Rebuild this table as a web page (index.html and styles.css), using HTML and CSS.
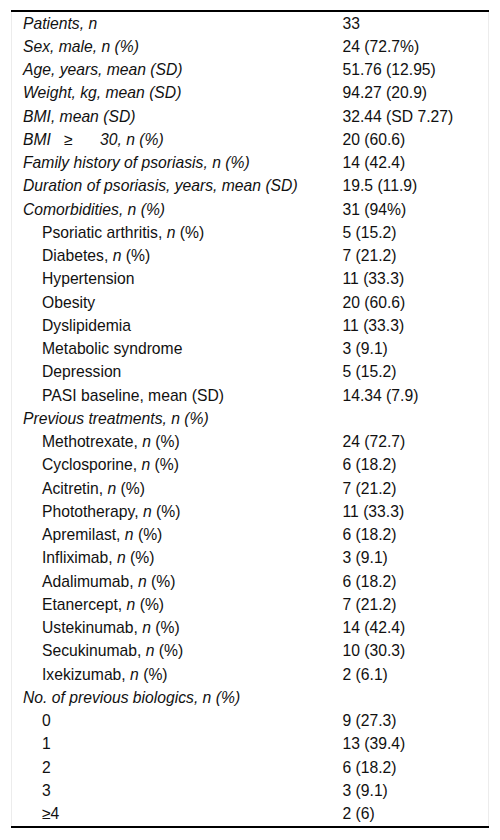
FILE: index.html
```html
<!DOCTYPE html>
<html lang="en">
<head>
    <meta charset="UTF-8">
    <meta name="viewport" content="width=device-width, initial-scale=1.0">
    <title>Baseline characteristics</title>
    <link rel="stylesheet" href="styles.css">
</head>
<body>
    <div class="wrap">
        <table class="data-table">
            <colgroup>
                <col class="col-label">
                <col class="col-value">
            </colgroup>
            <tbody>
                <tr><td class="head">Patients, n</td><td>33</td></tr>
                <tr><td class="head">Sex, male, n (%)</td><td>24 (72.7%)</td></tr>
                <tr><td class="head">Age, years, mean (SD)</td><td>51.76 (12.95)</td></tr>
                <tr><td class="head">Weight, kg, mean (SD)</td><td>94.27 (20.9)</td></tr>
                <tr><td class="head">BMI, mean (SD)</td><td>32.44 (SD 7.27)</td></tr>
                <tr><td class="head"><span class="bmi-word">BMI</span><span class="bmi-sign">≥</span>30, n (%)</td><td>20 (60.6)</td></tr>
                <tr><td class="head">Family history of psoriasis, n (%)</td><td>14 (42.4)</td></tr>
                <tr><td class="head">Duration of psoriasis, years, mean (SD)</td><td>19.5 (11.9)</td></tr>
                <tr><td class="head">Comorbidities, n (%)</td><td>31 (94%)</td></tr>
                <tr><td class="sub">Psoriatic arthritis, <i>n</i> (%)</td><td>5 (15.2)</td></tr>
                <tr><td class="sub">Diabetes, <i>n</i> (%)</td><td>7 (21.2)</td></tr>
                <tr><td class="sub">Hypertension</td><td>11 (33.3)</td></tr>
                <tr><td class="sub">Obesity</td><td>20 (60.6)</td></tr>
                <tr><td class="sub">Dyslipidemia</td><td>11 (33.3)</td></tr>
                <tr><td class="sub">Metabolic syndrome</td><td>3 (9.1)</td></tr>
                <tr><td class="sub">Depression</td><td>5 (15.2)</td></tr>
                <tr><td class="sub">PASI baseline, mean (SD)</td><td>14.34 (7.9)</td></tr>
                <tr><td class="head">Previous treatments, n (%)</td><td></td></tr>
                <tr><td class="sub">Methotrexate, <i>n</i> (%)</td><td>24 (72.7)</td></tr>
                <tr><td class="sub">Cyclosporine, <i>n</i> (%)</td><td>6 (18.2)</td></tr>
                <tr><td class="sub">Acitretin, <i>n</i> (%)</td><td>7 (21.2)</td></tr>
                <tr><td class="sub">Phototherapy, <i>n</i> (%)</td><td>11 (33.3)</td></tr>
                <tr><td class="sub">Apremilast, <i>n</i> (%)</td><td>6 (18.2)</td></tr>
                <tr><td class="sub">Infliximab, <i>n</i> (%)</td><td>3 (9.1)</td></tr>
                <tr><td class="sub">Adalimumab, <i>n</i> (%)</td><td>6 (18.2)</td></tr>
                <tr><td class="sub">Etanercept, <i>n</i> (%)</td><td>7 (21.2)</td></tr>
                <tr><td class="sub">Ustekinumab, <i>n</i> (%)</td><td>14 (42.4)</td></tr>
                <tr><td class="sub">Secukinumab, <i>n</i> (%)</td><td>10 (30.3)</td></tr>
                <tr><td class="sub">Ixekizumab, <i>n</i> (%)</td><td>2 (6.1)</td></tr>
                <tr><td class="head">No. of previous biologics, n (%)</td><td></td></tr>
                <tr><td class="sub">0</td><td>9 (27.3)</td></tr>
                <tr><td class="sub">1</td><td>13 (39.4)</td></tr>
                <tr><td class="sub">2</td><td>6 (18.2)</td></tr>
                <tr><td class="sub">3</td><td>3 (9.1)</td></tr>
                <tr><td class="sub">≥4</td><td>2 (6)</td></tr>
            </tbody>
        </table>
    </div>
</body>
</html>
```

FILE: styles.css
```css
body, html {
    margin: 0;
    padding: 0;
    background: #fff;
}

.wrap {
    padding: 10px 11px;
}

.data-table {
    width: 478px;
    table-layout: fixed;
    border-collapse: collapse;
    border-top: 2px solid #000;
    border-bottom: 2px solid #000;
    border-left: 1px solid #ececec;
    border-right: 1px solid #ececec;
    font-family: "Liberation Sans", Arial, sans-serif;
    font-size: 15.7px;
    color: #111;
}

.col-label {
    width: 320px;
}

.data-table td {
    height: 23.25px;
    padding: 0 11px;
    line-height: 18px;
    vertical-align: middle;
    white-space: nowrap;
}

.head {
    font-style: italic;
}

.data-table td.sub {
    padding-left: 30px;
}

/* spaced-out "BMI ≥ 30" label */
.bmi-word {
    display: inline-block;
    width: 41px;
}

.bmi-sign {
    display: inline-block;
    width: 36px;
    font-style: normal;
}
```
